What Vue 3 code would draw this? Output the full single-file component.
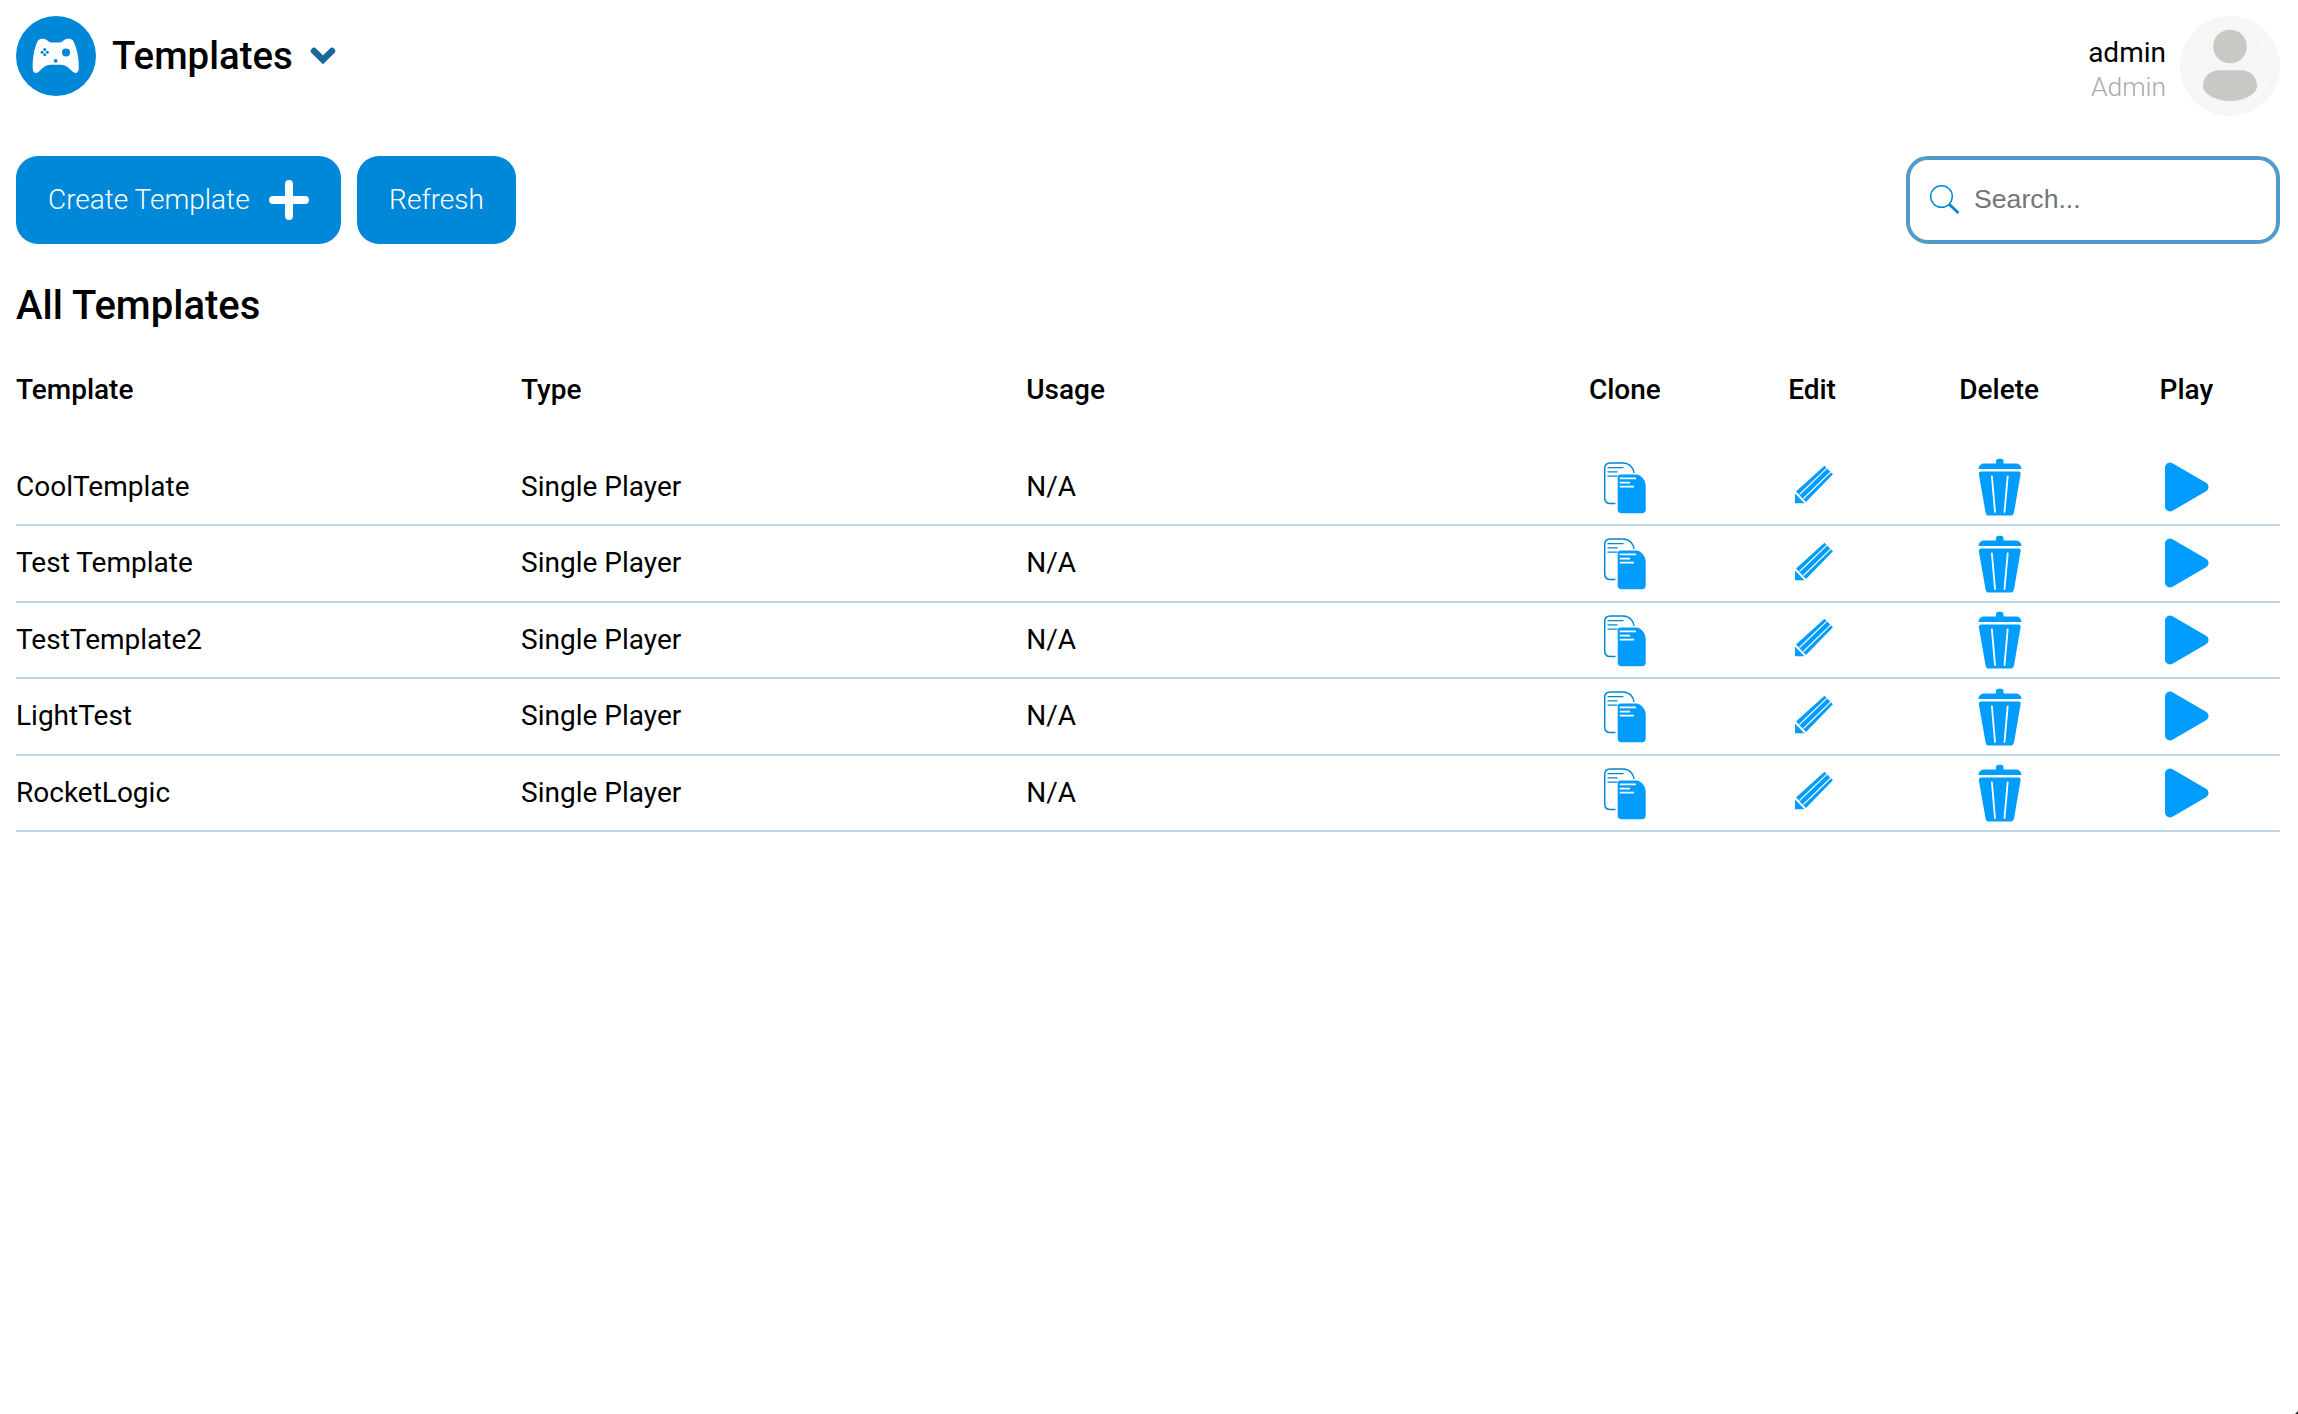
<script setup>
const templates = ['CoolTemplate', 'Test Template', 'TestTemplate2', 'LightTest', 'RocketLogic']
</script>

<template>
  <div class="page">
    <header class="topbar">
      <div class="brand">
        <svg class="logo" viewBox="0 0 80 80">
          <circle cx="40" cy="40" r="40" fill="#0088d8" />
          <path fill="#fff" d="M22 24.500C24.500 22 29 22.500 31.500 24.500Q33 26.400 35.500 26.400H43.500Q46 26.400 47.500 24.500C50 22.500 54.500 22 57 24.500C59.500 29 63 39 62.800 52C62.600 57.500 59.500 58 56.500 55.500C53 52 49.500 48.800 45 48.800H34.500C30 48.800 26.500 52 23 55.500C20 58 16.900 57.500 16.700 52C16.500 39 19.500 29 22 24.500Z" />
          <g fill="#0088d8">
            <circle cx="50" cy="36.500" r="4" />
            <circle cx="39.700" cy="44.800" r="1.900" />
            <circle cx="28.700" cy="33.600" r="1.500" />
            <circle cx="28.700" cy="38.800" r="1.500" />
            <circle cx="26.100" cy="36.200" r="1.500" />
            <circle cx="31.300" cy="36.200" r="1.500" />
          </g>
        </svg>
        <h1>Templates</h1>
        <svg class="chevron" viewBox="0 0 26 18">
          <path d="M4 4L13 12.800L22 4" fill="none" stroke="#17699c" stroke-width="6.400" stroke-linecap="round" stroke-linejoin="miter" />
        </svg>
      </div>
      <div class="account">
        <div class="who">
          <span class="name">admin</span>
          <span class="role">Admin</span>
        </div>
        <svg class="avatar" viewBox="0 0 100 100">
          <circle cx="50" cy="50" r="50" fill="#f6f6f6" />
          <circle cx="50" cy="50" r="39.500" fill="none" stroke="#fbfbfb" stroke-width="1" />
          <circle cx="50" cy="30.500" r="16.800" fill="#c9c8c5" />
          <path fill="#c9c8c5" d="M39 54.300H61C70 54.300 77 61 77 70C77 78 64 85 50 85C36 85 23 78 23 70C23 61 30 54.300 39 54.300Z" />
        </svg>
      </div>
    </header>

    <div class="toolbar">
      <button class="btn create">
        <span>Create Template</span>
        <svg class="plus" viewBox="0 0 40 40">
          <path d="M20 4V36M4 20H36" stroke="#fff" stroke-width="8" stroke-linecap="round" />
        </svg>
      </button>
      <button class="btn refresh">Refresh</button>
      <label class="search">
        <svg viewBox="0 0 30 30">
          <circle cx="11.500" cy="11.500" r="10.800" fill="none" stroke="#0088d8" stroke-width="1.400" />
          <path d="M19.200 19.200L28.500 28" stroke="#0088d8" stroke-width="2.800" />
        </svg>
        <input type="text" placeholder="Search..." />
      </label>
    </div>

    <h2>All Templates</h2>

    <div class="grid head">
      <span>Template</span><span>Type</span><span>Usage</span>
      <span class="act">Clone</span><span class="act">Edit</span><span class="act">Delete</span><span class="act">Play</span>
    </div>
    <div v-for="name in templates" :key="name" class="grid row">
      <span>{{ name }}</span><span>Single Player</span><span>N/A</span>
      <div class="act">
        <svg class="clone" width="44" height="52" viewBox="0 0 44 52">
          <path d="M12.500 41.500H7.500Q1.700 41.500 1.700 35.700V6.500Q1.700 .9 7.300 .9H20C27 1.200 30.500 6 31 11" fill="none" stroke="#0088d8" stroke-width="1.500" />
          <path d="M4.500 5.600H20.500M4.500 9.800H14.500M4.500 14.200H14.500" stroke="#0088d8" stroke-width="1.300" />
          <path d="M17.500 12.600H34C39 13.500 42.700 19 42.700 24V47.500Q42.700 51.200 39 51.200H18.500Q14.700 51.200 14.700 47.500V15.500Q14.700 12.600 17.500 12.600Z" fill="#009dff" />
          <path d="M16.700 16.400H33M16.700 20.600H27M16.700 24.600H31" stroke="#fff" stroke-width="1.600" />
        </svg>
      </div>
      <div class="act">
        <svg class="pencil" width="40" height="40" viewBox="0 0 40 40">
          <path d="M1 28.500V38.300H10.500ZM2 26.600L30.500 .8L38.900 9.200L12 37Z" fill="#009dff" />
          <path d="M5.500 29.500L33.500 2.600M9.500 33.500L37.300 6.400M1.300 27.500L11.300 37.800" stroke="#fff" stroke-width="1.100" />
        </svg>
      </div>
      <div class="act">
        <svg class="bin" width="44" height="58" viewBox="0 0 44 58">
          <path d="M.6 10.900C.6 7.500 3 5.600 7 5.600H18V3.500Q18 .7 20.700 .7H23Q25.500 .7 25.500 3.500V5.600H37C41 5.600 43.400 7.500 43.400 10.900ZM3.300 13.500H40.700Q43 13.500 42.600 16L36.300 53Q35.400 57.500 33 57.500H10Q8 57.500 7.300 53L.8 16Q.8 13.500 3.300 13.500Z" fill="#009dff" />
          <path d="M13.900 18.300L17 54M29.700 18.300L26.500 54" stroke="#fff" stroke-width="1.800" stroke-linecap="round" />
        </svg>
      </div>
      <div class="act">
        <svg class="play" width="44" height="50" viewBox="0 0 44 50">
          <path d="M5 5.500V44.500L38.500 25Z" fill="#009dff" stroke="#009dff" stroke-width="10" stroke-linejoin="round" />
        </svg>
      </div>
    </div>
    <i class="corner"></i>
  </div>
</template>

<style>
body { background: #fff; }
</style>

<style scoped>
.page {
  position: relative;
  box-sizing: border-box;
  min-height: 1414px;
  padding: 16px 18px 0 16px;
  font-family: Roboto, sans-serif;
  font-size: 28px;
  line-height: 34px;
  color: #000;
}
.topbar { display: flex; justify-content: space-between; height: 140px; }
.brand { display: flex; align-items: center; height: 80px; }
.logo { width: 80px; height: 80px; }
h1, h2 { margin: 0; font-size: 40px; line-height: 48px; font-weight: 500; }
h1 { margin-left: 16px; font-size: 38.400px; }
.chevron { width: 26px; height: 18px; margin-left: 17px; }
.account { display: flex; gap: 14px; height: 100px; }
.who { display: flex; flex-direction: column; text-align: right; padding-top: 20px; }
.role { color: #aaa; font-size: 26.400px; font-weight: 300; }
.avatar { width: 100px; height: 100px; }
.toolbar { display: flex; gap: 16px; height: 88px; }
.btn {
  display: flex;
  align-items: center;
  height: 88px;
  padding: 0 32px;
  border: 0;
  border-radius: 22px;
  background: #0088d8;
  color: #fff;
  font: 300 28px/34px Roboto, sans-serif;
}
.refresh { padding: 0 32.500px; }
.plus { width: 40px; height: 40px; margin-left: 19px; }
.search {
  display: flex;
  align-items: center;
  box-sizing: border-box;
  width: 374px;
  height: 88px;
  margin-left: auto;
  padding-left: 20px;
  border: 4px solid #529ac7;
  border-radius: 22px;
}
.search svg { width: 30px; height: 30px; flex: none; }
.search input {
  width: 280px;
  margin-left: 14px;
  padding: 0 0 1px;
  border: 0;
  outline: 0;
  background: none;
  font: 26.667px "Liberation Sans", Arial, sans-serif;
}
.search input::placeholder { color: #757575; }
h2 { margin-top: 38px; }
.grid {
  display: grid;
  grid-template-columns: repeat(3, 505.100px) repeat(4, 187.175px);
  align-items: center;
}
.head { height: 34px; margin: 43px 0 42.500px; font-weight: 500; }
.row { box-sizing: border-box; height: 76.500px; border-bottom: 2px solid #bbd5e5; }
.act { display: flex; justify-content: center; }
.act svg { display: block; }
.clone { margin-top: 2px; }
.pencil { margin: 0 0 3px 3px; }
.bin { margin: 1px 0 0 1px; }
.play { margin-left: 1px; }
.corner {
  position: absolute;
  right: 0;
  bottom: 0;
  width: 3px;
  height: 3px;
  background: linear-gradient(135deg, transparent 40%, #222 60%);
}
</style>
